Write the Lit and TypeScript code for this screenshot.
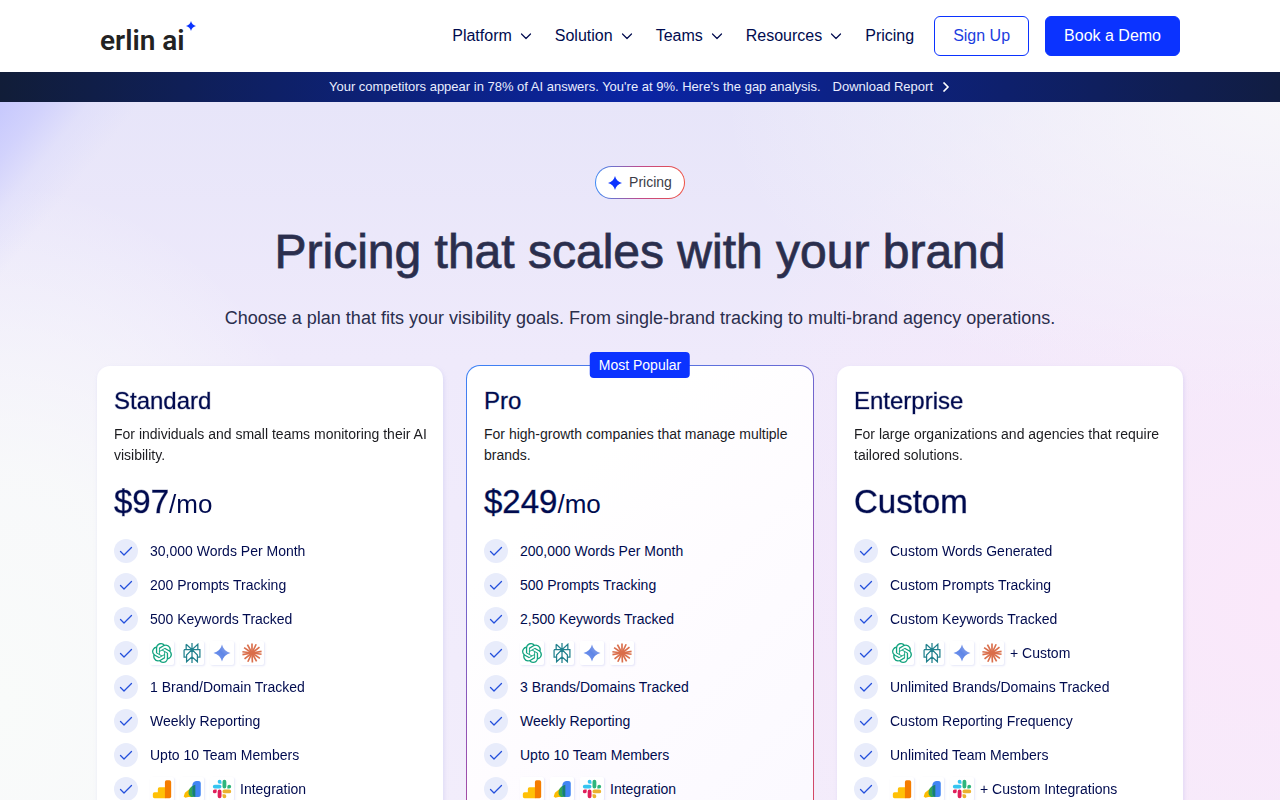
import { LitElement, html, svg, css } from "lit";
import { customElement, property } from "lit/decorators.js";

const wideStar = "M12 0C13.500 6.500 17.500 10.500 24 12C17.500 13.500 13.500 17.500 12 24C10.500 17.500 6.500 13.500 0 12C6.500 10.500 10.500 6.500 12 0Z";

const openai = svg`<path fill="#12a37f" d="M22.2819 9.8211a5.9847 5.9847 0 0 0-.5157-4.9108 6.0462 6.0462 0 0 0-6.5098-2.9A6.0651 6.0651 0 0 0 4.9807 4.1818a5.9847 5.9847 0 0 0-3.9977 2.9 6.0462 6.0462 0 0 0 .7427 7.0966 5.98 5.98 0 0 0 .511 4.9107 6.051 6.051 0 0 0 6.5146 2.9001A5.9847 5.9847 0 0 0 13.2599 24a6.0557 6.0557 0 0 0 5.7718-4.2058 5.9894 5.9894 0 0 0 3.9977-2.9001 6.0557 6.0557 0 0 0-.7475-7.0729zm-9.022 12.6081a4.4755 4.4755 0 0 1-2.8764-1.0408l.1419-.0804 4.7783-2.7582a.7948.7948 0 0 0 .3927-.6813v-6.7369l2.02 1.1686a.071.071 0 0 1 .038.052v5.5826a4.504 4.504 0 0 1-4.4945 4.4944zm-9.6607-4.1254a4.4708 4.4708 0 0 1-.5346-3.0137l.142.0852 4.783 2.7582a.7712.7712 0 0 0 .7806 0l5.8428-3.3685v2.3324a.0804.0804 0 0 1-.0332.0615L9.74 19.9502a4.4992 4.4992 0 0 1-6.1408-1.6464zM2.3408 7.8956a4.485 4.485 0 0 1 2.3655-1.9728V11.6a.7664.7664 0 0 0 .3879.6765l5.8144 3.3543-2.0201 1.1685a.0757.0757 0 0 1-.071 0l-4.8303-2.7865A4.504 4.504 0 0 1 2.3408 7.872zm16.5963 3.8558L13.1038 8.364 15.1192 7.2a.0757.0757 0 0 1 .071 0l4.8303 2.7913a4.4944 4.4944 0 0 1-.6765 8.1042v-5.6772a.79.79 0 0 0-.407-.667zm2.0107-3.0231l-.142-.0852-4.7735-2.7818a.7759.7759 0 0 0-.7854 0L9.409 9.2297V6.8974a.0662.0662 0 0 1 .0284-.0615l4.8303-2.7866a4.4992 4.4992 0 0 1 6.6802 4.66zM8.3065 12.863l-2.02-1.1638a.0804.0804 0 0 1-.038-.0567V6.0742a4.4992 4.4992 0 0 1 7.3757-3.4537l-.142.0805L8.704 5.459a.7948.7948 0 0 0-.3927.6813zm1.0976-2.3654l2.602-1.4998 2.6069 1.4998v2.9994l-2.5974 1.4997-2.6067-1.4997Z"/>`;

const perplexity = svg`<g fill="none" stroke="#20808d" stroke-width="1.5"><path d="M12 0V24M5 1.500L12 8L19 1.500V8M5 1.500V8M2.500 8H21.500V17H18.500M2.500 8V17H5.500M12 8L5.500 14.500V22.500L12 16.500L18.500 22.500V14.500Z"/></g>`;

const gemini = svg`<defs><linearGradient id="gem" x1="0" y1="1" x2="1" y2="0"><stop offset="0" stop-color="#7b9cf5"/><stop offset=".5" stop-color="#5f86e6"/><stop offset="1" stop-color="#a6b5ee"/></linearGradient></defs><path fill="url(#gem)" transform="translate(1.800 1.800) scale(.85)" d=${wideStar} />`;

const rays = [
  [12, 0.5], [17, 1.5], [21, 5], [23.5, 10], [23.5, 13.5], [21.5, 18.5],
  [17.5, 22], [12.5, 23.5], [7, 22.5], [3, 19], [0.5, 14], [0.5, 10.5], [2.5, 5.5], [6.5, 2],
];
const claude = svg`<g stroke="#da6f4c" stroke-width="2" stroke-linecap="butt">${rays.map(
  ([x, y]) => svg`<path d="M12 12L${x} ${y}"/>`
)}</g>`;

const analytics = svg`<path fill="#ffc107" d="M1 18a2 2 0 0 1 2-2h4v-4a2 2 0 0 1 2-2h7v13H3a2 2 0 0 1-2-2z"/><path fill="#f57c00" d="M15.500 3.500a2 2 0 0 1 2-2H21a2 2 0 0 1 2 2v17.500a2 2 0 0 1-2 2h-5.500z"/>`;

const ads = svg`<path fill="#fbbc04" d="M3.500 16.500L9 12L13 21.500H7.500L4 22.500L2 21Z"/><path fill="#34a853" d="M8 15C8.500 11 12 8 16 7V21.500H11C8.500 20.500 7.500 18 8 15Z"/><path fill="#4285f4" d="M12.500 7C13 4 15 2.500 17.500 2.500H19.500C21.500 2.500 22.500 3.500 22.500 5.500V18.500C22.500 20.500 21.500 21.500 19.500 21.500H16.500C13.500 21.500 12.500 19.500 12.500 17Z"/><path fill="#188070" d="M12.500 8.500L16 7V21.500C13.500 21 12.500 19.500 12.500 17Z"/>`;

const slack = svg`<g transform="translate(1 1) scale(.917)"><path fill="#e01e5a" d="M5.042 15.165a2.528 2.528 0 0 1-2.520 2.523A2.528 2.528 0 0 1 0 15.165a2.527 2.527 0 0 1 2.522-2.520h2.520zM6.313 15.165a2.527 2.527 0 0 1 2.521-2.520 2.527 2.527 0 0 1 2.521 2.520v6.313A2.528 2.528 0 0 1 8.834 24a2.528 2.528 0 0 1-2.521-2.522z"/><path fill="#36c5f0" d="M8.834 5.042a2.528 2.528 0 0 1-2.521-2.520A2.528 2.528 0 0 1 8.834 0a2.528 2.528 0 0 1 2.521 2.522v2.520zM8.834 6.313a2.528 2.528 0 0 1 2.521 2.521 2.528 2.528 0 0 1-2.521 2.521H2.522A2.528 2.528 0 0 1 0 8.834a2.528 2.528 0 0 1 2.522-2.521z"/><path fill="#2eb67d" d="M18.956 8.834a2.528 2.528 0 0 1 2.522-2.521A2.528 2.528 0 0 1 24 8.834a2.528 2.528 0 0 1-2.522 2.521h-2.522zM17.688 8.834a2.528 2.528 0 0 1-2.523 2.521 2.527 2.527 0 0 1-2.520-2.521V2.522A2.527 2.527 0 0 1 15.165 0a2.528 2.528 0 0 1 2.523 2.522z"/><path fill="#ecb22e" d="M15.165 18.956a2.528 2.528 0 0 1 2.523 2.522A2.528 2.528 0 0 1 15.165 24a2.527 2.527 0 0 1-2.520-2.522v-2.522zM15.165 17.688a2.527 2.527 0 0 1-2.520-2.523 2.526 2.526 0 0 1 2.520-2.520h6.313A2.527 2.527 0 0 1 24 15.165a2.528 2.528 0 0 1-2.522 2.523z"/></g>`;

interface Feature {
  text?: string;
  icons?: unknown[];
}
interface Plan {
  name: string;
  description: string;
  price: string;
  period?: string;
  badge?: string;
  features: Feature[];
}

const engines = [openai, perplexity, gemini, claude];
const tools = [analytics, ads, slack];

const plans: Plan[] = [
  {
    name: "Standard",
    description: "For individuals and small teams monitoring their AI visibility.",
    price: "$97",
    period: "/mo",
    features: [
      { text: "30,000 Words Per Month" },
      { text: "200 Prompts Tracking" },
      { text: "500 Keywords Tracked" },
      { icons: engines },
      { text: "1 Brand/Domain Tracked" },
      { text: "Weekly Reporting" },
      { text: "Upto 10 Team Members" },
      { icons: tools, text: "Integration" },
    ],
  },
  {
    name: "Pro",
    description: "For high-growth companies that manage multiple brands.",
    price: "$249",
    period: "/mo",
    badge: "Most Popular",
    features: [
      { text: "200,000 Words Per Month" },
      { text: "500 Prompts Tracking" },
      { text: "2,500 Keywords Tracked" },
      { icons: engines },
      { text: "3 Brands/Domains Tracked" },
      { text: "Weekly Reporting" },
      { text: "Upto 10 Team Members" },
      { icons: tools, text: "Integration" },
    ],
  },
  {
    name: "Enterprise",
    description: "For large organizations and agencies that require tailored solutions.",
    price: "Custom",
    features: [
      { text: "Custom Words Generated" },
      { text: "Custom Prompts Tracking" },
      { text: "Custom Keywords Tracked" },
      { icons: engines, text: "+ Custom" },
      { text: "Unlimited Brands/Domains Tracked" },
      { text: "Custom Reporting Frequency" },
      { text: "Unlimited Team Members" },
      { icons: tools, text: "+ Custom Integrations" },
    ],
  },
];

@customElement("plan-card")
class PlanCard extends LitElement {
  @property({ attribute: false }) plan!: Plan;

  static styles = css`
    :host { display: block; }
    * { box-sizing: border-box; margin: 0; }
    .card {
      position: relative;
      height: 100%;
      padding: 17px 12px 96px 17px;
      border: 1px solid transparent;
      border-radius: 14px;
      background: #fff padding-box;
      color: #000b4f;
    }
    .plain { filter: drop-shadow(1px 2px 2px rgba(120, 130, 220, 0.18)); }
    .featured {
      background:
        linear-gradient(135deg, #fff 25%, #fefcff 50%, #faf8ff) padding-box,
        linear-gradient(150deg, #3b82f6, #9b4fae 55%, #ee4444) border-box;
    }
    .badge {
      position: absolute;
      top: -14px;
      left: 50%;
      transform: translateX(-50%);
      padding: 0 9px;
      border-radius: 4px;
      background: #0b33ff;
      color: #fff;
      font-size: 14px;
      line-height: 26px;
      white-space: nowrap;
    }
    .name {
      font-size: 24px;
      font-weight: 400;
      line-height: 36px;
      -webkit-text-stroke: 1px rgba(0, 11, 79, 0.3);
    }
    .description {
      margin-top: 5px;
      color: #1b1b1f;
      font-size: 14px;
      line-height: 21px;
    }
    .price {
      margin-top: 16px;
      font-size: 33px;
      line-height: 40px;
      -webkit-text-stroke: 1px rgba(0, 11, 79, 0.35);
    }
    .period { font-size: 26px; line-height: 24px; -webkit-text-stroke: 0; }
    .features {
      display: flex;
      flex-direction: column;
      gap: 10px;
      margin-top: 17px;
      padding: 0;
      list-style: none;
      font-size: 14px;
      line-height: 24px;
    }
    .feature { display: flex; gap: 12px; }
    .tick {
      flex: none;
      display: grid;
      place-items: center;
      width: 24px;
      height: 24px;
      border-radius: 50%;
      background: #e8ecfb;
    }
    .detail { display: flex; gap: 6px; }
    .tile {
      display: grid;
      place-items: center;
      width: 24px;
      height: 24px;
      border-radius: 2px;
      background: #fff;
      box-shadow: 1px 1px 2px rgba(100, 110, 220, 0.16);
    }
    svg { display: block; }
  `;

  render() {
    const p = this.plan;
    return html`
      <article class="card ${p.badge ? "featured" : "plain"}">
        ${p.badge ? html`<span class="badge">${p.badge}</span>` : null}
        <h2 class="name">${p.name}</h2>
        <p class="description">${p.description}</p>
        <p class="price">${p.price}${p.period ? html`<span class="period">${p.period}</span>` : null}</p>
        <ul class="features">
          ${p.features.map(
            (f) => html`<li class="feature">
              <span class="tick">
                <svg width="14" height="14" viewBox="0 0 14 14" fill="none" stroke="#2450dc" stroke-width="1.3" stroke-linecap="round" stroke-linejoin="round" aria-hidden="true"><path d="M1.500 7.500L5 11L12.500 3.500" /></svg>
              </span>
              <span class="detail">
                ${(f.icons ?? []).map(
                  (i) => html`<span class="tile"><svg width="20" height="20" viewBox="0 0 24 24" aria-hidden="true">${i}</svg></span>`
                )}
                ${f.text ? html`<span>${f.text}</span>` : null}
              </span>
            </li>`
          )}
        </ul>
      </article>
    `;
  }
}

@customElement("app-root")
class AppRoot extends LitElement {
  static styles = css`
    :host {
      display: block;
      font-family: "Liberation Sans", Arial, sans-serif;
      color: #000b4f;
    }
    * { box-sizing: border-box; margin: 0; }
    a { color: inherit; text-decoration: none; }
    svg { display: block; }
    .header { background: #fff; }
    .bar {
      display: flex;
      align-items: center;
      justify-content: space-between;
      max-width: 1080px;
      min-height: 72px;
      margin: 0 auto;
    }
    .logo {
      display: flex;
      align-items: center;
      padding-top: 10px;
      color: #222;
      font-family: Roboto, sans-serif;
      font-size: 28px;
      font-weight: 600;
      line-height: 32px;
    }
    .spark { align-self: flex-start; margin: -4px 0 0 1px; }
    .menu { display: flex; align-items: center; gap: 23px; font-size: 16px; }
    .item {
      display: flex;
      align-items: center;
      gap: 8px;
      padding: 0;
      border: 0;
      background: none;
      color: inherit;
      font: inherit;
      line-height: 24px;
    }
    .actions { display: flex; gap: 16px; margin-left: -3px; }
    .button {
      padding: 0 18px;
      border: 1px solid #0b33ff;
      border-radius: 6px;
      font-size: 16px;
      line-height: 38px;
      text-align: center;
      color: #1c3ee0;
    }
    .primary { background: #0b33ff; color: #fff; }
    .announcement {
      display: flex;
      justify-content: center;
      gap: 12px;
      background: linear-gradient(90deg, #111d38, #0a24a4 50%, #111d42);
      color: #e9edff;
      font-size: 13px;
      line-height: 30px;
    }
    .report { display: flex; align-items: center; gap: 8px; }
    .hero {
      padding: 64px 24px 64px;
      background:
        linear-gradient(129deg, #c6c8fd, rgba(204, 205, 253, 0.8) 35px, rgba(215, 216, 252, 0.4) 70px, rgba(230, 229, 250, 0) 110px),
        radial-gradient(ellipse 380px 520px at 0 600px, #f9fbfa, rgba(249, 251, 250, 0.85) 45%, rgba(249, 251, 250, 0) 100%),
        radial-gradient(ellipse 560px 300px at 100% 0, #f7f6fa, rgba(247, 246, 250, 0) 100%),
        radial-gradient(ellipse 620px 560px at 100% 500px, #fae8fa, rgba(250, 232, 250, 0) 100%),
        linear-gradient(180deg, #e7e5f9, #efeafb 30%, #f3eefb 100%);
    }
    .inner { display: flex; flex-direction: column; align-items: center; max-width: 1088px; margin: 0 auto; }
    .pill {
      display: flex;
      align-items: center;
      gap: 7px;
      padding: 0 12px;
      border: 1px solid transparent;
      border-radius: 17px;
      background:
        linear-gradient(#fff, #fff) padding-box,
        linear-gradient(90deg, #3b8af6, #c04a8c 50%, #f05040) border-box;
      color: #3c3c46;
      font-size: 14px;
      line-height: 31px;
    }
    .title {
      margin-top: 23px;
      color: #2a2e4d;
      font-size: 48px;
      font-weight: 400;
      line-height: 60px;
      text-align: center;
      -webkit-text-stroke: 1px rgba(42, 46, 77, 0.8);
    }
    .lead { margin-top: 22px; color: #2a2e4d; font-size: 18px; line-height: 28px; text-align: center; }
    .plans {
      display: grid;
      grid-template-columns: repeat(auto-fit, minmax(320px, 1fr));
      gap: 22px;
      width: 100%;
      margin-top: 33px;
    }
  `;

  render() {
    return html`
      <header class="header">
        <div class="bar">
          <a class="logo" href="#">
            <span>erlin ai</span>
            <svg class="spark" width="10" height="10" viewBox="0 0 24 24" fill="#0b33ff" aria-hidden="true"><path d=${wideStar} /></svg>
          </a>
          <nav class="menu">
            ${["Platform", "Solution", "Teams", "Resources"].map(
              (label) => html`<button class="item" type="button">
                ${label}
                <svg width="12" height="12" viewBox="0 0 12 12" fill="none" stroke="#000b4f" stroke-width="1.2" stroke-linecap="round" stroke-linejoin="round" aria-hidden="true"><path d="M1.500 4L6 8.500L10.500 4" /></svg>
              </button>`
            )}
            <a class="item" href="#">Pricing</a>
            <div class="actions">
              <a class="button" href="#">Sign Up</a>
              <a class="button primary" href="#">Book a Demo</a>
            </div>
          </nav>
        </div>
      </header>
      <div class="announcement">
        <span>Your competitors appear in 78% of AI answers. You're at 9%. Here's the gap analysis.</span>
        <a class="report" href="#">
          Download Report
          <svg width="10" height="10" viewBox="0 0 10 10" fill="none" stroke="#fff" stroke-width="1.6" aria-hidden="true"><path d="M2.500 0.500L7 5L2.500 9.500" /></svg>
        </a>
      </div>
      <main class="hero">
        <div class="inner">
          <div class="pill">
            <svg width="14" height="14" viewBox="0 0 24 24" fill="#0b33ff" aria-hidden="true"><path d=${wideStar} /></svg>
            <span>Pricing</span>
          </div>
          <h1 class="title">Pricing that scales with your brand</h1>
          <p class="lead">Choose a plan that fits your visibility goals. From single-brand tracking to multi-brand agency operations.</p>
          <section class="plans" aria-label="Plans">
            ${plans.map((p) => html`<plan-card .plan=${p}></plan-card>`)}
          </section>
        </div>
      </main>
    `;
  }
}
